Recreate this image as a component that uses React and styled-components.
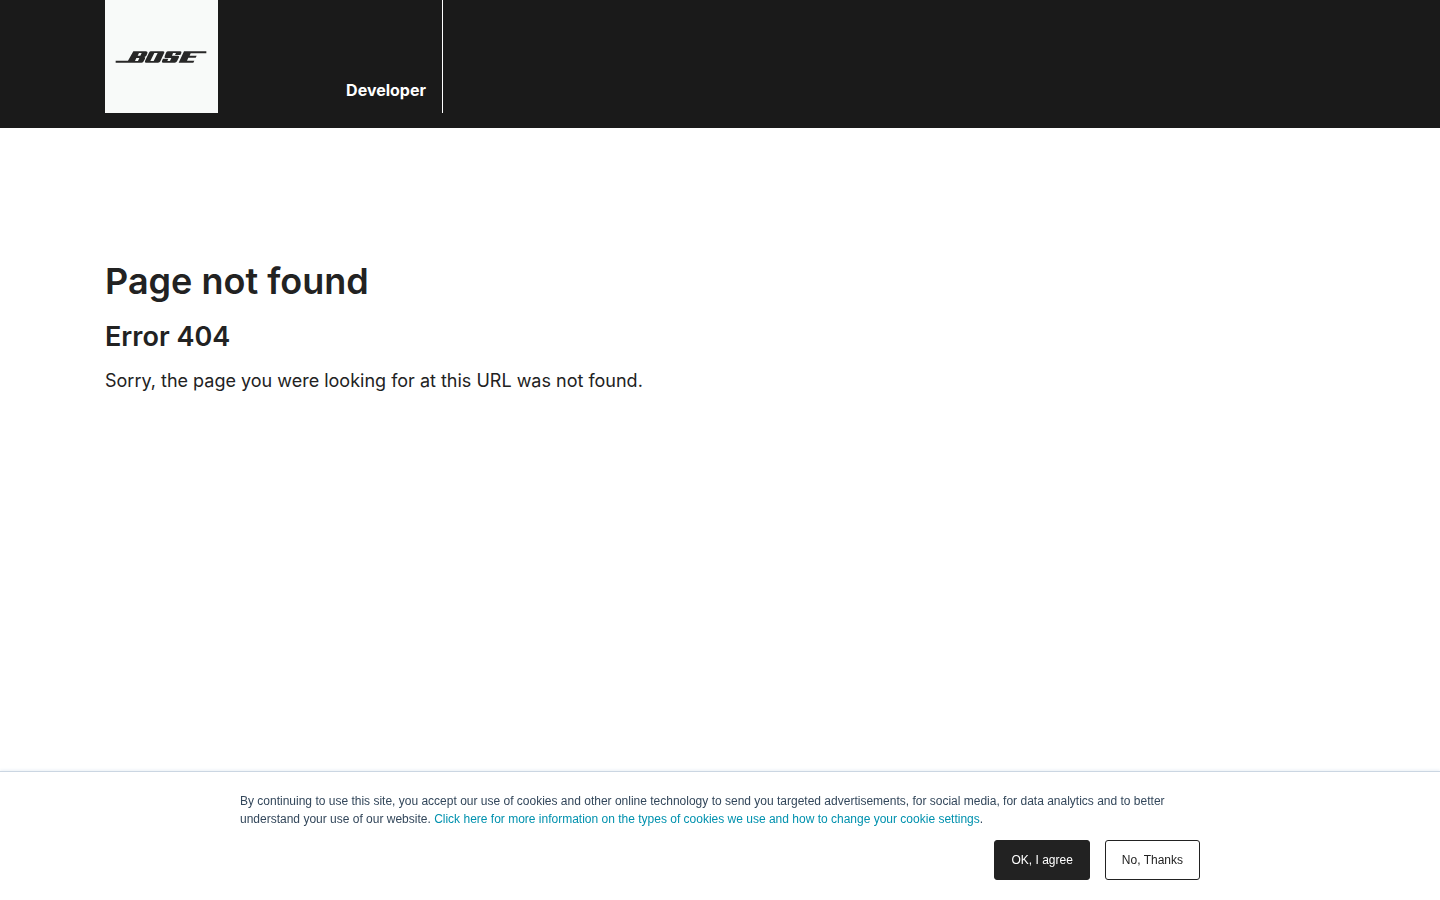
import React from "react";
import styled, { createGlobalStyle } from "styled-components";

const GlobalStyle = createGlobalStyle`
  *, *::before, *::after { box-sizing: border-box; }
  body {
    margin: 0;
    background: #fff;
    color: #222;
    font-family: Inter, "Open Sans", sans-serif;
  }
`;

const Header = styled.header`
  background: #1a1a1a;
  padding-bottom: 15px;
`;

const Container = styled.div`
  width: 100%;
  max-width: 1260px;
  margin: 0 auto;
  padding: 0 15px;
`;

const Brand = styled.a`
  display: flex;
  width: 338px;
  height: 113px;
  border-right: 1px solid #fff;
  color: #fff;
  text-decoration: none;
`;

const LogoTile = styled.span`
  display: flex;
  align-items: center;
  justify-content: center;
  width: 113px;
  padding-right: 1px;
  background: #f8faf9;
`;

const BrandName = styled.span`
  flex: 1;
  align-self: flex-end;
  padding: 0 16px 13px 0;
  font-size: 16px;
  line-height: 20px;
  font-weight: 700;
  text-align: right;
`;

const Main = styled.main`
  padding: 129px 0 160px;
`;

const Title = styled.h1`
  margin: 0 0 16px;
  font-size: 36px;
  line-height: 48px;
  font-weight: 600;
`;

const Subtitle = styled.h2`
  margin: 0 0 16px;
  font-size: 27px;
  line-height: 32px;
  font-weight: 600;
`;

const Message = styled.p`
  margin: 0;
  font-size: 18px;
  line-height: 24px;
`;

const CookieBanner = styled.section`
  position: fixed;
  right: 0;
  bottom: 0;
  left: 0;
  padding: 20px;
  border-top: 1px solid #cbd6e2;
  background: #fff;
  box-shadow: 0 -1px 3px #eaf0f6;
  font-family: "Liberation Sans", Arial, sans-serif;
  font-size: 12px;
  line-height: 18px;
  color: #33475b;
`;

const BannerInner = styled.div`
  max-width: 960px;
  margin: 0 auto;
`;

const BannerText = styled.p`
  margin: 0 0 12px;
`;

const BannerLink = styled.a`
  color: #0091ae;
  text-decoration: none;
`;

const Actions = styled.div`
  display: flex;
  justify-content: flex-end;
  gap: 15px;
`;

const Button = styled.button`
  height: 40px;
  padding: 0 16px;
  border: 1px solid #222;
  border-radius: 3px;
  background: ${(p) => (p.$primary ? "#222" : "#fff")};
  color: ${(p) => (p.$primary ? "#fff" : "#222")};
  font: inherit;
  cursor: pointer;
`;

function BoseLogo() {
  return (
    <svg width="92" height="12" viewBox="47 152 274 36" fill="#272727" fillRule="evenodd" role="img" aria-label="Bose">
      <path d="M48 181H85L101 153H138Q145 153 143 159L140 166Q138 169 134 170Q138 171 136 175L131 184Q129 187 125 187H48ZM118 158H126L122 166H114ZM110 173H119L115 182H106Z" />
      <path d="M154 153H190Q196 153 193 159L182 183Q180 187 175 187H139Q134 187 136 182L148 157Q150 153 154 153ZM164 158H174L162 182H152Z" />
      <path d="M206 153H242Q247 153 245 158L242 164H226L229 158H220L217 166H235Q240 166 238 171L232 183Q230 187 225 187H190Q185 187 187 182L190 175H206L203 182H211L215 173H197Q193 173 195 168L199 157Q201 153 206 153Z" />
      <path d="M253 153H320V159H273L270 166H291L288 172H266L262 181H284L281 187H237Z" />
    </svg>
  );
}

export default function App() {
  return (
    <>
      <GlobalStyle />
      <Header>
        <Container>
          <Brand href="#">
            <LogoTile>
              <BoseLogo />
            </LogoTile>
            <BrandName>Developer</BrandName>
          </Brand>
        </Container>
      </Header>
      <Main>
        <Container>
          <Title>Page not found</Title>
          <Subtitle>Error 404</Subtitle>
          <Message>Sorry, the page you were looking for at this URL was not found.</Message>
        </Container>
      </Main>
      <CookieBanner aria-label="Cookie notice">
        <BannerInner>
          <BannerText>
            By continuing to use this site, you accept our use of cookies and other online technology to send you
            targeted advertisements, for social media, for data analytics and to better understand your use of our
            website.{" "}
            <BannerLink href="#">
              Click here for more information on the types of cookies we use and how to change your cookie settings
            </BannerLink>
            .
          </BannerText>
          <Actions>
            <Button type="button" $primary>OK, I agree</Button>
            <Button type="button">No, Thanks</Button>
          </Actions>
        </BannerInner>
      </CookieBanner>
    </>
  );
}
